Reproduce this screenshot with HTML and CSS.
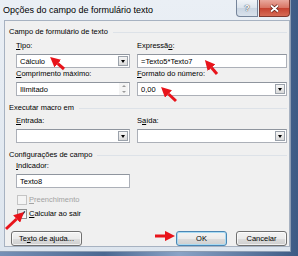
FILE: index.html
```html
<!DOCTYPE html>
<html>
<head>
<meta charset="utf-8">
<link rel="stylesheet" href="styles.css">
</head>
<body>
<div class="window">
<div class="titlebar">
<span class="title">Opções do campo de formulário texto</span>
<div class="caption-buttons">
<span class="cap help">?</span>
<span class="cap close">
<svg width="11" height="9" viewBox="0 0 11 9"><path d="M2 1.5L9 7.5M9 1.5L2 7.5" stroke="#5a1c14" stroke-width="3.2"/><path d="M2 1.5L9 7.5M9 1.5L2 7.5" stroke="#fff" stroke-width="1.8"/></svg>
</span>
</div>
</div>

<div class="client">
<div class="section">Campo de formulário de texto</div>
<div class="grid grid-first">
<div class="field">
<span class="label"><u>T</u>ipo:</span>
<div class="box">Cálculo<span class="drop"></span></div>
</div>
<div class="field">
<span class="label">Expressã<u>o</u>:</span>
<div class="box">=Texto5*Texto7</div>
</div>
<div class="field">
<span class="label"><u>C</u>omprimento máximo:</span>
<div class="box">Ilimitado<span class="spin"><i class="up"></i><i class="down"></i></span></div>
</div>
<div class="field">
<span class="label"><u>F</u>ormato do número:</span>
<div class="box">0,00<span class="drop"></span></div>
</div>
</div>

<div class="section section-gap">Executar macro em</div>
<div class="grid grid-macro">
<div class="field">
<span class="label"><u>E</u>ntrada:</span>
<div class="box"><span class="drop"></span></div>
</div>
<div class="field">
<span class="label">S<u>a</u>ída:</span>
<div class="box"><span class="drop"></span></div>
</div>
</div>

<div class="section section-gap">Configurações de campo</div>
<div class="field field-single">
<span class="label"><u>I</u>ndicador:</span>
<div class="box">Texto8</div>
</div>

<div class="check-row disabled-row">
<span class="check disabled"></span>
<span><u>P</u>reenchimento</span>
</div>
<div class="check-row check-row-second">
<span class="check">
<svg width="8" height="8" viewBox="0 0 8 8"><path d="M1.2 4.2L3 6.2L6.8 1.4" fill="none" stroke="#1e2f4a" stroke-width="1.5"/></svg>
</span>
<span><u>C</u>alcular ao sair</span>
</div>

<div class="buttons">
<span class="btn btn-help">Te<u>x</u>to de ajuda...</span>
<span class="btn btn-ok">OK</span>
<span class="btn">Cancelar</span>
</div>
</div>
</div>

<svg class="arrows" width="298" height="256" viewBox="0 0 298 256">
<defs>
<marker id="ah" viewBox="0 0 10 10" refX="0" refY="5" markerWidth="3.4" markerHeight="3.4" orient="auto">
<path d="M0 0L10 5L0 10z" fill="#e8141b"/>
</marker>
</defs>
<g stroke="#e8141b" stroke-width="3" marker-end="url(#ah)">
<line x1="64" y1="69" x2="57.8" y2="63.6"/>
<line x1="217" y1="74" x2="211.6" y2="67.8"/>
<line x1="176" y1="101" x2="168.5" y2="94"/>
<line x1="6" y1="229" x2="16.6" y2="219"/>
<line x1="155" y1="236" x2="165" y2="236"/>
</g>
</svg>
</body>
</html>
```

FILE: styles.css
```css
body {
margin: 0;
width: 298px;
height: 256px;
overflow: hidden;
position: relative;
background: linear-gradient(90deg, #7690b6 0%, #4b6891 35%, #8aa3c6 60%, #3d5a84 100%);
font-family: "Liberation Sans", Arial, sans-serif;
font-size: 7.5px;
color: #000;
}

.window {
width: 291px;
height: 252px;
box-sizing: border-box;
display: flex;
flex-direction: column;
background: linear-gradient(#eaeff5, #dde5ee);
border-right: 1px solid #8b9bb1;
border-bottom: 1px solid #8b9bb1;
}

/* barra de titulo */
.titlebar {
height: 20px;
display: flex;
align-items: flex-start;
}

.title {
flex: 1;
font-size: 9px;
line-height: 20px;
padding-left: 3px;
white-space: nowrap;
}

.caption-buttons {
display: flex;
gap: 1px;
}

.cap {
height: 17px;
box-sizing: border-box;
border: 1px solid #75849a;
border-top: none;
display: flex;
align-items: center;
justify-content: center;
}

.help {
width: 22px;
border-radius: 0 0 0 4px;
background: linear-gradient(#f1f4f8, #dbe3ec 50%, #c9d4e1 51%, #d9e2ec);
color: #fff;
font-weight: bold;
font-size: 9px;
text-shadow: 0 0 1px #3c4654, 0 0 1px #3c4654;
}

.close {
width: 31px;
border-color: #80382e;
border-radius: 0 0 4px 0;
background: linear-gradient(#e9a89d, #d87362 50%, #c5412f 51%, #d66c56);
}

/* area interna */
.client {
margin-left: 4px;
height: 227px;
box-sizing: border-box;
border: 1px solid #a7b2c1;
background: #f0f0f0;
padding: 0 2px 0 4px;
display: flex;
flex-direction: column;
}

.section {
display: flex;
align-items: center;
line-height: 10px;
height: 10px;
margin-top: 6px;
}

.section::after {
content: '';
flex: 1;
height: 1px;
background: #dde2e8;
margin-left: 5px;
}

.section-gap {
margin-top: 7px;
}

.grid {
display: grid;
grid-template-columns: 114px 150px;
column-gap: 7px;
row-gap: 1px;
margin-left: 7px;
}

.grid-first {
margin-top: 4px;
}

.grid-macro {
margin-top: 3px;
}

.field {
display: flex;
flex-direction: column;
gap: 3px;
}

.field-single {
margin: 1px 0 0 7px;
width: 114px;
}

.label {
line-height: 10px;
height: 10px;
white-space: nowrap;
}

.box {
height: 14px;
box-sizing: border-box;
border: 1px solid #acb0b8;
border-top-color: #8f959e;
background: #fff;
display: flex;
align-items: center;
padding-left: 3px;
white-space: nowrap;
}

.drop {
margin-left: auto;
margin-right: 1px;
width: 10px;
height: 10px;
box-sizing: border-box;
border: 1px solid #9ba2ab;
background: linear-gradient(#f6f6f6, #dadada);
display: flex;
align-items: center;
justify-content: center;
}

.drop::before {
content: '';
border-top: 3px solid #000;
border-left: 2.5px solid transparent;
border-right: 2.5px solid transparent;
}

.spin {
margin-left: auto;
margin-right: 1px;
width: 9px;
height: 12px;
display: flex;
flex-direction: column;
}

.spin i {
flex: 1;
display: flex;
align-items: center;
justify-content: center;
background: #f4f4f4;
}

.spin .up::before {
content: '';
border-bottom: 2px solid #9a9a9a;
border-left: 2px solid transparent;
border-right: 2px solid transparent;
}

.spin .down::before {
content: '';
border-top: 2px solid #9a9a9a;
border-left: 2px solid transparent;
border-right: 2px solid transparent;
}

/* caixas de selecao */
.check-row {
display: flex;
align-items: center;
gap: 2px;
margin: 7px 0 0 8px;
line-height: 10px;
}

.check-row-second {
margin-top: 4px;
}

.disabled-row {
color: #a3a3a3;
}

.check {
width: 10px;
height: 10px;
box-sizing: border-box;
border: 1px solid #8e8f8f;
background: linear-gradient(135deg, #dcdcdc, #fbfbfb);
display: flex;
align-items: center;
justify-content: center;
}

.check.disabled {
border-color: #c4c4c4;
background: #f4f4f4;
}

/* botoes */
.buttons {
display: flex;
gap: 9px;
margin: 12px 0 0 2px;
}

.btn {
width: 51px;
height: 15px;
box-sizing: border-box;
border: 1px solid #707070;
border-radius: 3px;
background: linear-gradient(#f3f3f3, #ebebeb 50%, #dddddd 51%, #cfcfcf);
box-shadow: inset 0 0 0 1px rgba(255, 255, 255, 0.7);
display: flex;
align-items: center;
justify-content: center;
}

.btn-help {
width: 71px;
}

.btn-ok {
margin-left: auto;
border-color: #4a86b4;
box-shadow: inset 0 0 0 1px #a9dbf3;
}

.arrows {
position: absolute;
top: 0;
left: 0;
pointer-events: none;
}
```
